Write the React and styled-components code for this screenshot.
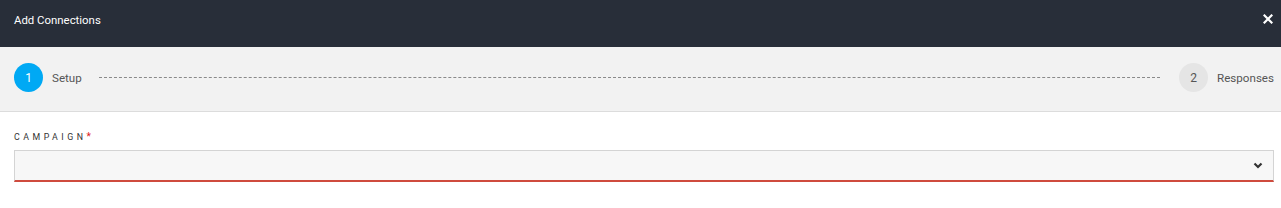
import React from "react";
import styled, { createGlobalStyle } from "styled-components";

const Global = createGlobalStyle`
  html, body { margin: 0; padding: 0; background: #fff; }
  body { font-family: Roboto, "Liberation Sans", sans-serif; }
  * { box-sizing: border-box; }
`;

const Modal = styled.div`
  width: 1281px;
  height: 208px;
  background: #fff;
`;

const Header = styled.div`
  height: 47px;
  background: #282e39;
  display: flex;
  align-items: center;
  justify-content: space-between;
  padding: 0 8px 8px 14px;
  color: #fff;
`;

const Title = styled.div`
  font-size: 11.4px;
  color: #fff;
`;

const Close = styled.button`
  border: 0;
  background: transparent;
  padding: 0;
  display: flex;
  width: 10px;
  height: 10px;
  margin-top: -2px;
  cursor: pointer;
`;

const Stepper = styled.div`
  height: 65px;
  background: #f2f2f2;
  border-bottom: 1px solid #dcdcdc;
  display: flex;
  align-items: center;
  padding: 0 7px 3px 14px;
`;

const Step = styled.div`
  display: flex;
  align-items: center;
  gap: 9px;
  flex-shrink: 0;
`;

const Circle = styled.div`
  width: 29px;
  height: 29px;
  border-radius: 50%;
  display: flex;
  align-items: center;
  justify-content: center;
  font-size: 12px;
  background: ${(p) => (p.$active ? "#00a9f4" : "#e5e5e5")};
  color: ${(p) => (p.$active ? "#fff" : "#555")};
`;

const StepLabel = styled.span`
  font-size: 11.6px;
  color: #555;
`;

const Line = styled.div`
  flex: 1;
  margin: 0 19px 0 17px;
  border-top: 1px dashed #8a8a8a;
  height: 0;
`;

const Body = styled.div`
  padding: 19px 7px 0 14px;
`;

const Label = styled.div`
  font-size: 8.8px;
  letter-spacing: 3.5px;
  color: #333;
  text-transform: uppercase;
  margin-bottom: 8px;
  display: flex;
  align-items: center;
`;

const Required = styled.span`
  color: #e02020;
  margin-left: 0;
  font-size: 10px;
`;

const Select = styled.div`
  height: 32px;
  background: #f7f7f7;
  border: 1px solid #d4d4d4;
  border-bottom: 2px solid #cf4b3e;
  display: flex;
  align-items: center;
  justify-content: flex-end;
  padding-right: 10px;
`;

export default function App() {
  return (
    <Modal>
      <Global />
      <Header>
        <Title>Add Connections</Title>
        <Close aria-label="close">
          <svg width="10" height="10" viewBox="0 0 10 10">
            <path d="M1.5 1.5 L8.5 8.5 M8.5 1.5 L1.5 8.5" stroke="#fff" strokeWidth="2.2" strokeLinecap="square" />
          </svg>
        </Close>
      </Header>
      <Stepper>
        <Step>
          <Circle $active>1</Circle>
          <StepLabel>Setup</StepLabel>
        </Step>
        <Line />
        <Step>
          <Circle>2</Circle>
          <StepLabel>Responses</StepLabel>
        </Step>
      </Stepper>
      <Body>
        <Label>
          Campaign<Required>*</Required>
        </Label>
        <Select>
          <svg width="10" height="7" viewBox="0 0 10 7">
            <path d="M1.5 1.5 L5 5 L8.5 1.5" stroke="#333" strokeWidth="2.2" fill="none" />
          </svg>
        </Select>
      </Body>
    </Modal>
  );
}
